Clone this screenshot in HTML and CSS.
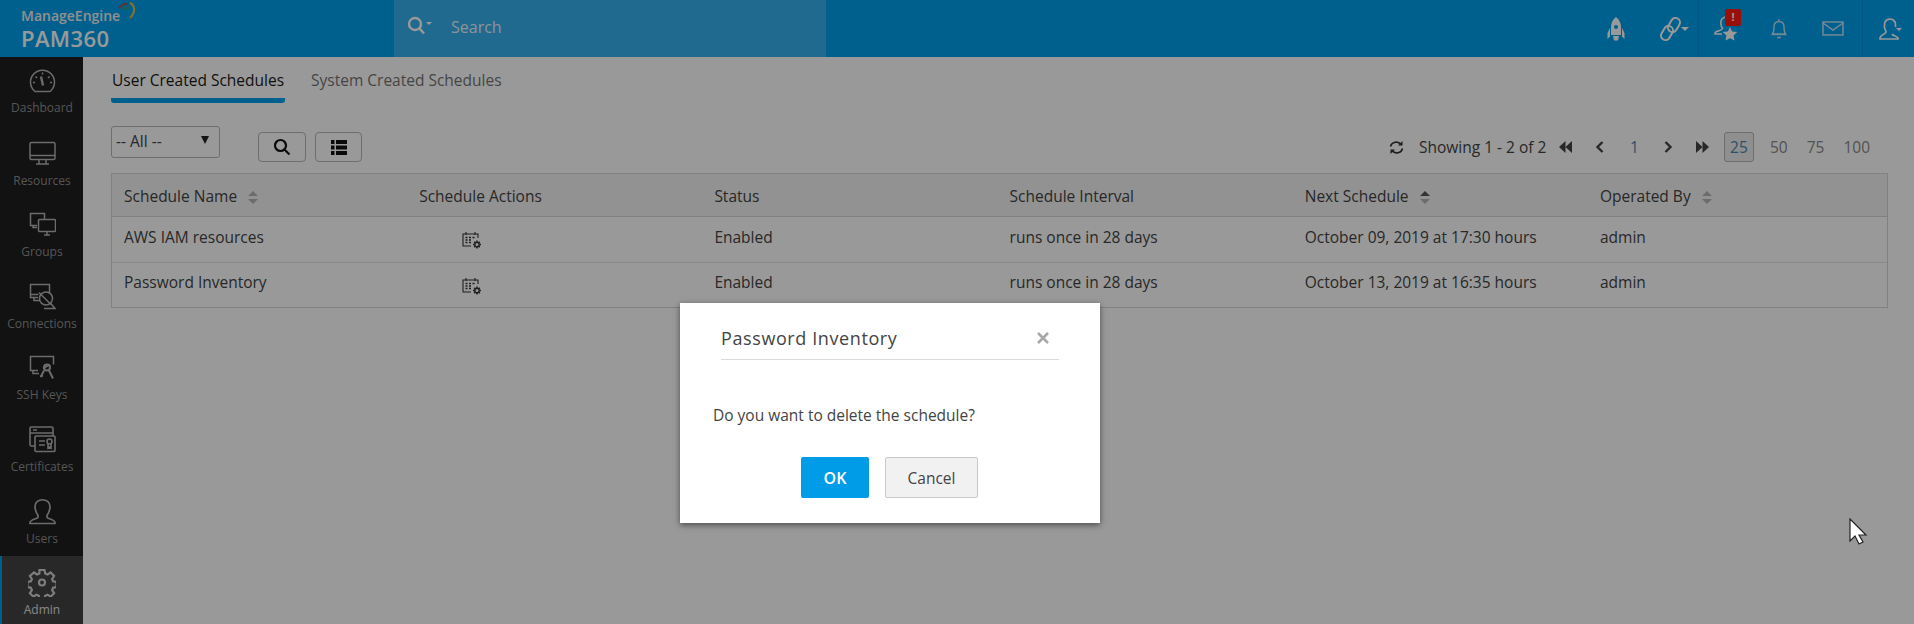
FILE: index.html
```html
<!DOCTYPE html>
<html lang="en">
<head>
<meta charset="utf-8">
<title>PAM360 - Schedules</title>
<link rel="stylesheet" href="styles.css">
</head>
<body>
<div class="app">
  <header class="topbar">
    <div class="brand">
      <div class="brand-me">ManageEngine<svg class="brand-arc" width="20" height="18" viewBox="0 0 20 18" fill="none" stroke-width="1.700"><path d="M1 6C3 3 6 1.500 10 1.500" stroke="#c2413a"/><path d="M3 7C5 5 7 3.500 10 3.500" stroke="#2d8fc4"/><path d="M6 8C7 6.500 9 5.500 11 5.500" stroke="#3aa06c"/><path d="M12 1c5 2 6 9 0 15" stroke="#e0c040" stroke-width="2"/></svg></div>
      <div class="brand-name">PAM360</div>
    </div>
    <div class="search">
      <svg class="search-icon" width="26" height="20" viewBox="0 0 26 20" fill="none" stroke="currentColor" stroke-width="2.400"><circle cx="8" cy="8" r="6"/><path d="M12.500 12.500L17 17.500"/><path d="M19 6h6l-3 3z" fill="currentColor" stroke="none"/></svg>
      <span class="search-text">Search</span>
    </div>
    <div class="top-icons">
      <div class="top-group top-group-a">
        <svg width="20" height="26" viewBox="0 0 20 26" fill="currentColor"><path d="M10 1c3.500 3 5 6 5 10v8H5v-8c0-4 1.500-7 5-10z"/><path d="M4 12L1.500 17v6L4 20.500zM16 12l2.500 5v6L16 20.500zM7 20h6l-1 4.500H8z"/><circle cx="10" cy="11" r="2" fill="#00a0ec"/></svg>
        <svg width="32" height="26" viewBox="0 0 32 26" fill="none" stroke="currentColor" stroke-width="2"><rect x="-4.500" y="-7.500" width="9" height="15" rx="4.500" transform="translate(9 17) rotate(30)"/><rect x="-4.500" y="-7.500" width="9" height="15" rx="4.500" transform="translate(16 9) rotate(30)"/><path d="M23 11h8l-4 4z" fill="currentColor" stroke="none"/></svg>
      </div>
      <div class="top-group top-group-mid">
        <div class="star-icon">
          <svg width="28" height="26" viewBox="0 0 28 26" fill="none" stroke="currentColor" stroke-width="1.500"><path d="M9 13c-3-3-3-9 0-11 3-2 7-1 8 2M8 13c-1 2-7 2-7 4v1h7"/><path d="M16 11l2.200 4.500 5 .6-3.600 3.500.9 5-4.500-2.400-4.500 2.400.9-5-3.600-3.500 5-.6z" fill="currentColor" stroke="none"/></svg>
          <span class="badge">!</span>
        </div>
        <svg class="dim" width="16" height="21" viewBox="0 0 16 21" fill="none" stroke="currentColor" stroke-width="1.400"><path d="M1.500 16c1.500-2 1.500-4 1.500-7 0-3.500 2-5.500 5-5.500s5 2 5 5.500c0 3 0 5 1.500 7zM.5 16.500h15M6 19.500h4M8 1v2.500"/></svg>
        <svg class="dim" width="22" height="15" viewBox="0 0 22 15" fill="none" stroke="currentColor" stroke-width="1.500"><rect x="1" y="1" width="20" height="13"/><path d="M1 2l10 7 10-7"/></svg>
      </div>
      <div class="top-group top-group-user">
        <svg width="24" height="23" viewBox="0 0 24 23" fill="none" stroke="currentColor" stroke-width="1.700"><path d="M7 14c-2-3-2-6-1-9 2-4 8-4 10 0 .6 1.500.8 3 .5 5M7 14v1c0 2-6 3-6 6v1h18v-1c-1-2-5-2-6-4"/><path d="M17 11h6l-3 3z" fill="currentColor" stroke="none"/></svg>
      </div>
    </div>
  </header>

  <div class="body">
    <nav class="sidebar">
      <a class="nav-item">
        <svg width="27" height="24" viewBox="0 0 27 24" fill="none" stroke="currentColor" stroke-width="1.500"><path d="M6 22a12 12 0 1 1 15 0z"/><path d="M12 7l2 9" stroke-width="2.400"/><path d="M4 13h2M21 13h2M6.500 7l1.500 1.500M20.500 7L19 8.500M13.500 3v2"/></svg>
        <span>Dashboard</span>
      </a>
      <a class="nav-item">
        <svg width="27" height="24" viewBox="0 0 27 24" fill="none" stroke="currentColor" stroke-width="1.500"><rect x="1" y="1" width="25" height="17" rx="1.500"/><path d="M1 14h25M10 18v4M17 18v4M7 22.500h13"/></svg>
        <span>Resources</span>
      </a>
      <a class="nav-item">
        <svg width="27" height="24" viewBox="0 0 27 24" fill="none" stroke="currentColor" stroke-width="1.500"><path d="M8 13H1.500V1h14v6"/><path d="M4 13v2h4"/><rect x="9.500" y="7" width="17" height="12" rx="1"/><path d="M15 22.500h6M18 19v3"/></svg>
        <span>Groups</span>
      </a>
      <a class="nav-item">
        <svg width="27" height="26" viewBox="0 0 27 26" fill="none" stroke="currentColor" stroke-width="1.500"><path d="M9 14H1.500V1h19v9M1.500 11h8M5 14v3h6"/><circle cx="17" cy="15" r="6.500"/><path d="M10 9l12 12M21 19l5 6H15"/></svg>
        <span>Connections</span>
      </a>
      <a class="nav-item">
        <svg width="27" height="24" viewBox="0 0 27 24" fill="none" stroke="currentColor" stroke-width="1.500"><path d="M9 15H1.500V1h23v8M4 15v3h6"/><circle cx="18" cy="12" r="3" stroke-width="2"/><path d="M15 15l-3 6M20 15l4 8M11 21l3-1M14 13l7-4" stroke-width="2"/></svg>
        <span>SSH Keys</span>
      </a>
      <a class="nav-item">
        <svg width="27" height="27" viewBox="0 0 27 27" fill="none" stroke="currentColor" stroke-width="1.600"><path d="M6 20H2.500A1.500 1.500 0 0 1 1 18.500V2.500A1.500 1.500 0 0 1 2.500 1h20A1.500 1.500 0 0 1 24 2.500V10"/><path d="M1 7h23M4 4h4"/><rect x="6" y="10" width="20" height="15.500" rx="1"/><path d="M10 15h6M10 19h6"/><circle cx="20.500" cy="15.500" r="2.500"/><path d="M19 18v4l1.500-1 1.500 1v-4"/></svg>
        <span>Certificates</span>
      </a>
      <a class="nav-item">
        <svg width="27" height="26" viewBox="0 0 27 26" fill="none" stroke="currentColor" stroke-width="1.700"><path d="M9 17c-2-3-3-6-3-9 0-9 15-9 15 0 0 3-1 6-3 9v2c0 1 8 2 8 5v1H1v-1c0-3 8-4 8-5z"/></svg>
        <span>Users</span>
      </a>
      <a class="nav-item nav-item-active">
        <svg width="28" height="28" viewBox="0 0 28 28" fill="none" stroke="currentColor" stroke-width="2.200"><path d="M11.500 1.500h5l.7 3.500 2.400 1 3-2 3.500 3.500-2 3 1 2.400 3.500.7v5l-3.500.7-1 2.400 2 3-3.500 3.500-3-2-2.400 1-.7 3.500h-5l-.7-3.500-2.400-1-3 2-3.500-3.500 2-3-1-2.400-3.500-.7v-5l3.500-.7 1-2.400-2-3L6 4l3 2 2.400-1z"/><circle cx="14" cy="14" r="3"/></svg>
        <span>Admin</span>
      </a>
    </nav>

    <main class="content">
      <div class="tabs">
        <div class="tab tab-active">User Created Schedules</div>
        <div class="tab">System Created Schedules</div>
      </div>

      <div class="toolbar">
        <div class="select"><span>-- All --</span><i class="select-caret"></i></div>
        <button class="tool-btn" type="button">
          <svg width="18" height="18" viewBox="0 0 18 18" fill="none" stroke="currentColor" stroke-width="2.200"><circle cx="7.500" cy="7.500" r="5.500"/><path d="M11.500 11.500L16.500 16.500"/></svg>
        </button>
        <button class="tool-btn tool-btn-list" type="button">
          <svg width="16" height="15" viewBox="0 0 16 15" fill="currentColor"><path d="M0 0h3.500v4H0zM5 0h11v4H5zM0 5.500h3.500v4H0zM5 5.500h11v4H5zM0 11h3.500v4H0zM5 11h11v4H5z"/></svg>
        </button>
        <div class="pager">
          <svg class="pg-refresh" width="15" height="15" viewBox="0 0 15 15" fill="none" stroke="currentColor" stroke-width="1.600"><path d="M1.500 6.500C2.500 2 9 .5 12 4.500"/><path d="M13.500 1v4.500H9" fill="currentColor" stroke="none"/><path d="M13.500 8.500C12.500 13 6 14.500 3 10.500"/><path d="M1.500 14V9.500H6" fill="currentColor" stroke="none"/></svg>
          <span class="pg-info">Showing 1 - 2 of 2</span>
          <svg class="pg-first" width="13" height="12" viewBox="0 0 13 12" fill="currentColor"><path d="M6.500 0v12L0 6zM13 0v12L6.500 6z"/></svg>
          <svg class="pg-prev" width="9" height="12" viewBox="0 0 9 12" fill="none" stroke="currentColor" stroke-width="2.400"><path d="M7.500 1L2.500 6l5 5"/></svg>
          <span class="pg-num">1</span>
          <svg class="pg-next" width="9" height="12" viewBox="0 0 9 12" fill="none" stroke="currentColor" stroke-width="2.400"><path d="M1.500 1l5 5-5 5"/></svg>
          <svg class="pg-last" width="13" height="12" viewBox="0 0 13 12" fill="currentColor"><path d="M0 0v12l6.500-6zM6.500 0v12L13 6z"/></svg>
          <span class="pg-size pg-size-on">25</span>
          <span class="pg-size">50</span>
          <span class="pg-size">75</span>
          <span class="pg-size">100</span>
        </div>
      </div>

      <div class="grid">
        <div class="row row-head">
          <div class="cell">Schedule Name<i class="sort"></i></div>
          <div class="cell">Schedule Actions</div>
          <div class="cell">Status</div>
          <div class="cell">Schedule Interval</div>
          <div class="cell">Next Schedule<i class="sort sort-active"></i></div>
          <div class="cell">Operated By<i class="sort"></i></div>
        </div>
        <div class="row">
          <div class="cell">AWS IAM resources</div>
          <div class="cell cell-action"><svg width="20" height="19" viewBox="0 0 20 19" fill="none" stroke="currentColor" stroke-width="1.100"><path d="M9 15H1V3h15v4M4 1v3M13 1v3"/><path d="M3.500 6.500h2M7 6.500h2M10.500 6.500h2M3.500 9h2M7 9h2M3.500 11.500h2M7 11.500h2" stroke-width="1.300"/><circle cx="15" cy="13.500" r="2.200" stroke-width="1.400"/><path d="M15 9.500v1.500M15 16v1.500M11 13.500h1.500M17.500 13.500H19M12.200 10.700l1 1M16.800 15.300l1 1M17.800 10.700l-1 1M13.200 15.300l-1 1" stroke-width="1.500"/></svg></div>
          <div class="cell">Enabled</div>
          <div class="cell">runs once in 28 days</div>
          <div class="cell">October 09, 2019 at 17:30 hours</div>
          <div class="cell">admin</div>
        </div>
        <div class="row">
          <div class="cell">Password Inventory</div>
          <div class="cell cell-action"><svg width="20" height="19" viewBox="0 0 20 19" fill="none" stroke="currentColor" stroke-width="1.100"><path d="M9 15H1V3h15v4M4 1v3M13 1v3"/><path d="M3.500 6.500h2M7 6.500h2M10.500 6.500h2M3.500 9h2M7 9h2M3.500 11.500h2M7 11.500h2" stroke-width="1.300"/><circle cx="15" cy="13.500" r="2.200" stroke-width="1.400"/><path d="M15 9.500v1.500M15 16v1.500M11 13.500h1.500M17.500 13.500H19M12.200 10.700l1 1M16.800 15.300l1 1M17.800 10.700l-1 1M13.200 15.300l-1 1" stroke-width="1.500"/></svg></div>
          <div class="cell">Enabled</div>
          <div class="cell">runs once in 28 days</div>
          <div class="cell">October 13, 2019 at 16:35 hours</div>
          <div class="cell">admin</div>
        </div>
      </div>
    </main>
  </div>
</div>

<div class="overlay"></div>

<div class="modal">
  <div class="modal-head">
    <span class="modal-title">Password Inventory</span>
    <svg class="modal-close" width="12" height="12" viewBox="0 0 12 12" fill="none" stroke="#a8a8a8" stroke-width="2.600"><path d="M1 1l10 10M11 1L1 11"/></svg>
  </div>
  <p class="modal-msg">Do you want to delete the schedule?</p>
  <div class="modal-actions">
    <button class="btn btn-ok" type="button">OK</button>
    <button class="btn btn-cancel" type="button">Cancel</button>
  </div>
</div>

<svg class="cursor" width="20" height="28" viewBox="0 0 20 28"><path d="M1 1v22l5-5 4 8 4-2-4-7h7z" fill="#fff" stroke="#222" stroke-width="1.200"/></svg>
</body>
</html>
```

FILE: styles.css
```css
* { box-sizing: border-box; }
html, body { margin: 0; height: 100%; }
body {
  width: 1914px;
  height: 624px;
  overflow: hidden;
  position: relative;
  background: #fff;
  font-family: "Open Sans", "Liberation Sans", sans-serif;
  font-size: 15.500px;
  color: #333;
}
.app { display: flex; flex-direction: column; height: 624px; }

.topbar {
  height: 57px;
  flex: none;
  display: flex;
  background: #00a0ec;
  position: relative;
  z-index: 1;
  color: #fff;
}
.brand { width: 394px; padding: 7px 0 0 21px; }
.brand-me { font-size: 14px; font-weight: 600; line-height: 17px; display: flex; width: 118px; white-space: nowrap; position: relative; color: #f0f0f0; }
.brand-arc { position: absolute; left: 97px; top: -5px; }
.brand-name { font-size: 22px; font-weight: 600; line-height: 26px; letter-spacing: .4px; margin-top: 1px; }
.search {
  width: 432px;
  display: flex;
  align-items: center;
  gap: 18px;
  padding: 0 0 5px 13px;
  background: #38b1ef;
}
.search-text { font-size: 16px; line-height: 22px; margin-top: 1px; color: #eaf4fa; }
.top-icons { flex: 1; display: flex; justify-content: flex-end; }
.top-group { display: flex; align-items: center; height: 57px; border-right: 1px solid #0090d6; }
.top-group-a { gap: 32px; padding-right: 8px; }
.top-group-mid { gap: 29px; padding-left: 15px; width: 164px; }
.top-group-mid svg.dim + svg.dim { margin-left: 6px; }
.top-group-user { width: 51px; padding-left: 16px; border-right: 0; }
.dim { color: #bfe4f7; }
.star-icon { position: relative; width: 28px; height: 26px; }
.badge {
  position: absolute;
  left: 11px;
  top: -7px;
  width: 16px;
  height: 17px;
  border-radius: 2px;
  background: #ff1a10;
  color: #fff;
  font-size: 11px;
  font-weight: 700;
  line-height: 16px;
  text-align: center;
}

.body { flex: 1; display: flex; min-height: 0; }
.sidebar { width: 83px; flex: none; background: #1e1e1e; margin-top: -2px; }
.nav-item {
  height: 71.600px;
  display: flex;
  flex-direction: column;
  align-items: center;
  padding-left: 1px;
  color: #b4b4b4;
  font-size: 12px;
}
.nav-item svg { height: 29px; margin-top: 12px; flex: none; }
.nav-item span { position: relative; top: 1px; line-height: 16px; margin-top: 4px; color: #8f8f8f; white-space: nowrap; }
.nav-item:first-child span { top: 0; }
.nav-item-active { background: #444; border-left: 2px solid #00a0ec; padding: 0 1px 0 0; color: #d0d0d0; }
.nav-item-active span { color: #e0e0e0; }

.content { flex: 1; padding: 0 26px 0 28px; min-width: 0; }
.tabs { display: flex; gap: 25px; height: 45px; align-items: flex-start; }
.tab { padding: 13px 1px 8px; line-height: 20px; color: #757575; white-space: nowrap; }
.tab-active { color: #1a1a1a; border-bottom: 5px solid #00a0ec; border-radius: 0 0 3px 3px; }

.toolbar { display: flex; align-items: flex-start; height: 71px; padding-top: 24px; }
.select {
  width: 109px;
  height: 32px;
  border: 1px solid #b8b8b8;
  border-radius: 3px;
  display: flex;
  align-items: center;
  justify-content: space-between;
  padding: 0 10px 2px 4px;
  color: #444;
}
.select-caret { width: 0; height: 0; border: 4px solid transparent; border-top: 8px solid #222; border-bottom: 0; margin-top: -2px; }
.tool-btn {
  width: 48px;
  height: 30px;
  margin: 6px 0 0 38px;
  border: 1px solid #b8b8b8;
  border-radius: 4px;
  background: transparent;
  color: #111;
  display: flex;
  align-items: center;
  justify-content: center;
  padding: 0;
}
.tool-btn-list { width: 47px; margin-left: 9px; }
.pager { margin-left: auto; margin-right: 18px; display: flex; align-items: center; height: 30px; margin-top: 6px; color: #444; }
.pg-refresh { margin-right: 15px; color: #333; }
.pg-info { width: 140px; white-space: nowrap; }
.pg-first { color: #444; margin-right: 23px; }
.pg-prev { color: #444; margin-right: 26px; }
.pg-num { color: #4a86b5; margin-right: 25px; width: 9px; }
.pg-next { color: #444; margin-right: 23px; }
.pg-last { color: #444; margin-right: 15px; }
.pg-size { color: #8a8a8a; margin-left: 19px; }
.pg-size-on {
  margin-left: 0;
  margin-right: -3px;
  width: 30px;
  height: 30px;
  line-height: 28px;
  text-align: center;
  border: 1px solid #b8b8b8;
  border-radius: 3px;
  background: #efefef;
  color: #4a86b5;
}

.grid { border: 1px solid #d8d8d8; }
.row { display: grid; grid-template-columns: repeat(5, 295.200px) 1fr; height: 45px; }
.row-head { background: #f3f3f3; height: 43px; border-bottom: 1px solid #d8d8d8; }
.row-head .cell { padding-top: 12px; }
.row:last-child { border-top: 1px solid #e6e6e6; }
.row:last-child .cell { padding-top: 9px; }
.row:last-child .cell-action { padding-top: 14px; }
.cell { padding: 10px 12px 0; line-height: 20px; color: #444; white-space: nowrap; }
.cell-action { padding-left: 55px; padding-top: 14px; color: #333; }
.cell-action svg { display: block; }
.sort {
  display: inline-block;
  position: relative;
  width: 10px;
  height: 13px;
  margin-left: 11px;
  vertical-align: -2px;
}
.sort::before, .sort::after {
  content: "";
  position: absolute;
  left: 0;
  border: 5px solid transparent;
}
.sort::before { top: 0; border-top: 0; border-bottom: 5.500px solid #b5b5b5; }
.sort::after { bottom: 0; border-bottom: 0; border-top: 5.500px solid #b5b5b5; }
.sort-active::before { border-bottom-color: #555; }

.overlay { position: absolute; inset: 0; background: rgba(0, 0, 0, .4); z-index: 5; }

.modal {
  position: absolute;
  left: 680px;
  top: 303px;
  width: 420px;
  height: 220px;
  background: #fff;
  box-shadow: 0 2px 6px rgba(0, 0, 0, .5);
  z-index: 6;
  padding: 0 33px;
}
.modal-head {
  display: flex;
  align-items: center;
  justify-content: space-between;
  height: 57px;
  margin: 0 8px;
  padding: 14px 10px 0 0;
  border-bottom: 1px solid #dcdcdc;
}
.modal-title { font-size: 18px; letter-spacing: .6px; color: #444; }
.modal-msg { margin: 44px 0 0; line-height: 22px; color: #444; }
.modal-actions { display: flex; gap: 16px; margin-top: 31px; padding-left: 88px; }
.btn { height: 41px; font-family: inherit; font-size: 15.500px; border-radius: 2px; padding: 0; }
.btn-ok { width: 68px; border: 0; background: #009ce8; color: #fff; font-weight: 600; font-size: 16px; }
.btn-cancel { width: 93px; border: 1px solid #c9c9c9; background: #f1f1f1; color: #444; }

.cursor { position: absolute; left: 1849px; top: 518px; z-index: 7; }
```
